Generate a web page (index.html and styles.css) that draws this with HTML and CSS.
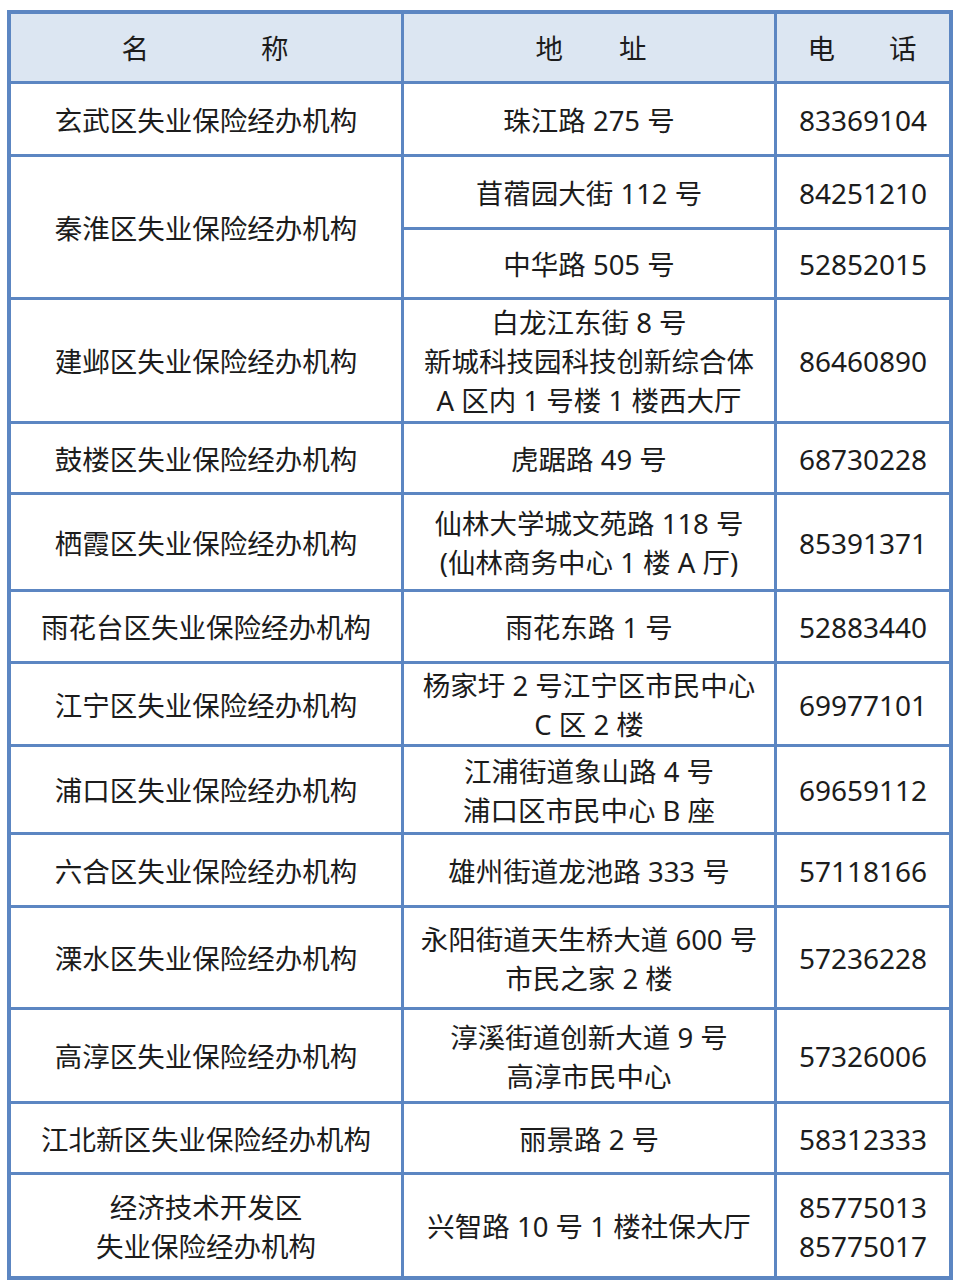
FILE: index.html
```html
<!DOCTYPE html>
<html lang="zh-CN">
<head>
<meta charset="utf-8">
<title>失业保险经办机构</title>
<link rel="stylesheet" href="styles.css">
</head>
<body>
<div class="table">
  <div class="cell head"><span class="hd hd-name"><span>名</span><span>称</span></span></div>
  <div class="cell head"><span class="hd hd-addr"><span>地</span><span>址</span></span></div>
  <div class="cell head"><span class="hd hd-tel"><span>电</span><span>话</span></span></div>

  <div class="cell">玄武区失业保险经办机构</div>
  <div class="cell">珠江路 275 号</div>
  <div class="cell num">83369104</div>

  <div class="cell span2">秦淮区失业保险经办机构</div>
  <div class="cell">苜蓿园大街 112 号</div>
  <div class="cell num">84251210</div>
  <div class="cell">中华路 505 号</div>
  <div class="cell num">52852015</div>

  <div class="cell">建邺区失业保险经办机构</div>
  <div class="cell">白龙江东街 8 号<br>新城科技园科技创新综合体<br>A 区内 1 号楼 1 楼西大厅</div>
  <div class="cell num">86460890</div>

  <div class="cell">鼓楼区失业保险经办机构</div>
  <div class="cell">虎踞路 49 号</div>
  <div class="cell num">68730228</div>

  <div class="cell">栖霞区失业保险经办机构</div>
  <div class="cell">仙林大学城文苑路 118 号<br>(仙林商务中心 1 楼 A 厅)</div>
  <div class="cell num">85391371</div>

  <div class="cell">雨花台区失业保险经办机构</div>
  <div class="cell">雨花东路 1 号</div>
  <div class="cell num">52883440</div>

  <div class="cell">江宁区失业保险经办机构</div>
  <div class="cell">杨家圩 2 号江宁区市民中心<br>C 区 2 楼</div>
  <div class="cell num">69977101</div>

  <div class="cell">浦口区失业保险经办机构</div>
  <div class="cell">江浦街道象山路 4 号<br>浦口区市民中心 B 座</div>
  <div class="cell num">69659112</div>

  <div class="cell">六合区失业保险经办机构</div>
  <div class="cell">雄州街道龙池路 333 号</div>
  <div class="cell num">57118166</div>

  <div class="cell">溧水区失业保险经办机构</div>
  <div class="cell">永阳街道天生桥大道 600 号<br>市民之家 2 楼</div>
  <div class="cell num">57236228</div>

  <div class="cell">高淳区失业保险经办机构</div>
  <div class="cell">淳溪街道创新大道 9 号<br>高淳市民中心</div>
  <div class="cell num">57326006</div>

  <div class="cell">江北新区失业保险经办机构</div>
  <div class="cell">丽景路 2 号</div>
  <div class="cell num">58312333</div>

  <div class="cell">经济技术开发区<br>失业保险经办机构</div>
  <div class="cell">兴智路 10 号 1 楼社保大厅</div>
  <div class="cell num">85775013<br>85775017</div>
</div>
</body>
</html>
```

FILE: styles.css
```css
html, body {
  margin: 0;
  padding: 0;
  background: #ffffff;
}

body {
  padding: 10px 0 0 7px;
  font-family: "Noto Sans", "Noto Sans CJK SC", sans-serif;
  color: #1c1c1c;
}

.table {
  width: 946px;
  box-sizing: border-box;
  display: grid;
  grid-template-columns: 390px 370px 172px;
  grid-template-rows: 67px 70px 70px 67px 121px 68px 94px 69px 80px 85px 70px 99px 91px 68px 101px;
  gap: 3px;
  padding: 4px;
  background: #5c86c2;
}

.cell {
  background: #ffffff;
  display: flex;
  align-items: center;
  justify-content: center;
  text-align: center;
  font-size: 27.5px;
  line-height: 39px;
  white-space: nowrap;
  padding-top: 2px;
  box-sizing: border-box;
}

.cell.num {
  font-size: 28px;
}

.cell.head {
  background: #dce6f2;
}

.span2 {
  grid-row: span 2;
}

.hd {
  display: flex;
}

.hd-name {
  gap: 112px;
  margin-left: -2px;
}

.hd-addr {
  gap: 56px;
  margin-left: 4px;
}

.hd-tel {
  gap: 54px;
  margin-left: -2px;
}
```
